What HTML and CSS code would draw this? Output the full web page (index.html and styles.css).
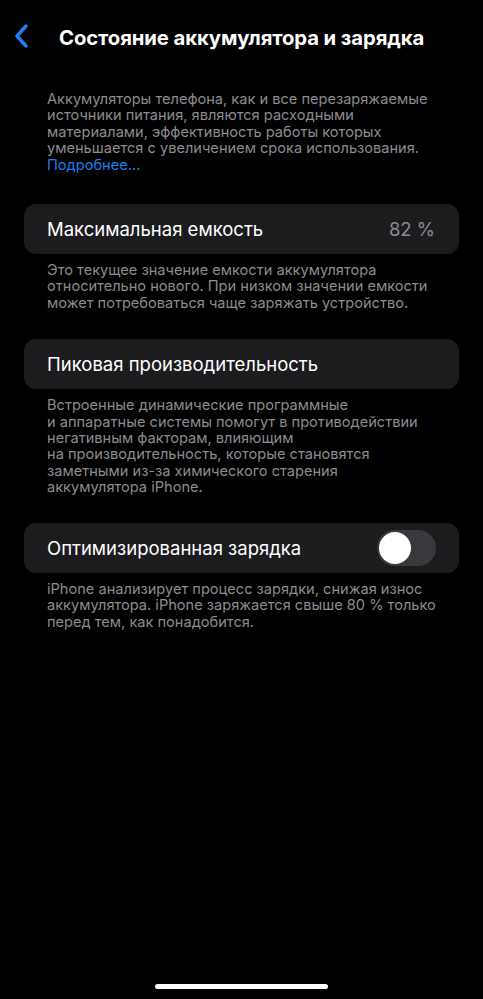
FILE: index.html
```html
<!DOCTYPE html>
<html lang="ru">
<head>
  <meta charset="UTF-8">
  <meta name="viewport" content="width=device-width, initial-scale=1.0">
  <title>Состояние аккумулятора и зарядка</title>
  <link rel="stylesheet" href="styles.css">
</head>
<body>
  <header class="nav">
    <a class="back" href="#">
      <svg width="16" height="24" viewBox="0 0 16 24">
        <polyline points="13,2 4,12 13,22" fill="none" stroke="#1a82f7" stroke-width="3.4" stroke-linecap="round" stroke-linejoin="round"/>
      </svg>
    </a>
    <h1>Состояние аккумулятора и зарядка</h1>
  </header>

  <main>
    <p class="intro">
      Аккумуляторы телефона, как и все перезаряжаемые<br>
      источники питания, являются расходными<br>
      материалами, эффективность работы которых<br>
      уменьшается с увеличением срока использования.<br>
      <a href="#" class="more">Подробнее...</a>
    </p>

    <!-- Максимальная емкость -->
    <div class="cell first">
      <span class="label">Максимальная емкость</span>
      <span class="value">82 %</span>
    </div>
    <p class="note">
      Это текущее значение емкости аккумулятора<br>
      относительно нового. При низком значении емкости<br>
      может потребоваться чаще заряжать устройство.
    </p>

    <!-- Пиковая производительность -->
    <div class="cell second">
      <span class="label">Пиковая производительность</span>
    </div>
    <p class="note">
      Встроенные динамические программные<br>
      и аппаратные системы помогут в противодействии<br>
      негативным факторам, влияющим<br>
      на производительность, которые становятся<br>
      заметными из-за химического старения<br>
      аккумулятора iPhone.
    </p>

    <!-- Оптимизированная зарядка -->
    <div class="cell third">
      <span class="label">Оптимизированная зарядка</span>
      <span class="toggle"><span class="knob"></span></span>
    </div>
    <p class="note">
      iPhone анализирует процесс зарядки, снижая износ<br>
      аккумулятора. iPhone заряжается свыше 80 % только<br>
      перед тем, как понадобится.
    </p>
  </main>

  <div class="home-bar"></div>
</body>
</html>
```

FILE: styles.css
```css
body {
  font-family: 'Inter', 'Noto Sans', sans-serif;
  background-color: #000;
  color: #fff;
  margin: 0;
  padding: 0;
  width: 483px;
  height: 999px;
  position: relative;
  overflow: hidden;
}

.nav {
  display: flex;
  align-items: center;
  height: 74px;
  padding-left: 13px;
}

.back {
  display: flex;
  width: 16px;
  height: 24px;
  margin-top: -3px;
}

.nav h1 {
  margin: 0 0 0 30px;
  font-size: 20.3px;
  font-weight: 700;
  letter-spacing: -0.1px;
}

.intro,
.note {
  margin: 0;
  padding: 0 0 0 47px;
  font-size: 14.6px;
  line-height: 16.4px;
  color: #8b8b90;
  white-space: nowrap;
}

.intro {
  margin-top: 17px;
}

.more {
  color: #1a7ee8;
  text-decoration: none;
}

.cell {
  display: flex;
  align-items: center;
  justify-content: space-between;
  height: 50px;
  margin: 0 24px;
  padding: 0 24px 0 23px;
  background-color: #1c1c1e;
  border-radius: 12px;
}

.cell.first {
  margin-top: 31px;
}

.cell.second {
  margin-top: 28px;
}

.cell.third {
  margin-top: 27px;
}

.note {
  margin-top: 8px;
}

.label {
  font-size: 18.5px;
  color: #fff;
}

.value {
  font-size: 18.5px;
  color: #8b8b90;
}

.toggle {
  display: flex;
  align-items: center;
  width: 59px;
  height: 36px;
  margin-right: -1px;
  padding: 0 2px;
  box-sizing: border-box;
  background-color: #39393d;
  border-radius: 18px;
}

.knob {
  width: 32px;
  height: 32px;
  border-radius: 50%;
  background-color: #fff;
}

.home-bar {
  position: absolute;
  left: 155px;
  top: 984px;
  width: 173px;
  height: 5px;
  border-radius: 3px;
  background-color: #fff;
}
```
